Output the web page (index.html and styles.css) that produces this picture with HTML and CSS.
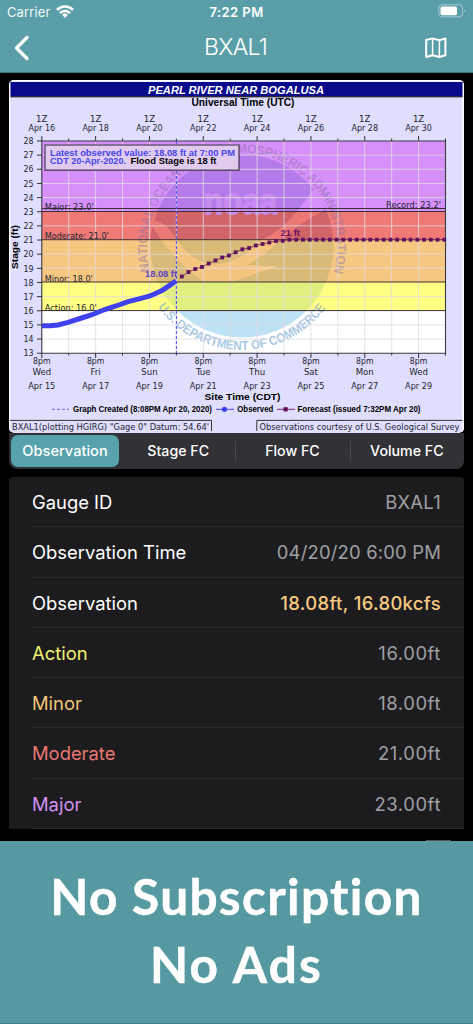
FILE: index.html
```html
<!DOCTYPE html>
<html lang="en">
<head>
<meta charset="utf-8">
<title>BXAL1</title>
<link rel="stylesheet" href="styles.css">
</head>
<body>
<div class="screen">
  <header class="header">
    <div class="status">
      <div class="carrier"><span>Carrier</span>
        <svg width="18" height="13" viewBox="0 0 18 13"><g fill="none" stroke="#fff" stroke-width="2.5"><path d="M1 4.9a11.3 11.3 0 0 1 16 0"/><path d="M4 8.1a7 7 0 0 1 10 0"/></g><path d="M6.2 9.9a4 4 0 0 1 5.6 0L9 12.8z" fill="#fff"/></svg>
      </div>
      <div class="time">7:22 PM</div>
      <svg class="battery" width="28" height="14" viewBox="0 0 28 14"><rect x=".8" y=".8" width="23.8" height="12" rx="3.4" fill="none" stroke="#a3cace"/><rect x="2.5" y="2.4" width="16.5" height="8.8" rx="1.8" fill="#fff"/><path d="M26 4.8q1.6 2 0 4z" fill="#a3cace"/></svg>
    </div>
    <nav class="nav">
      <svg width="16" height="26" viewBox="0 0 16 26"><path d="M13 2.5 2.5 13 13 23.5" fill="none" stroke="#fff" stroke-width="3.3" stroke-linecap="round" stroke-linejoin="round"/></svg>
      <h1>BXAL1</h1>
      <svg width="22" height="22" viewBox="0 0 22 22"><path d="M1.2 3 7.6 1.4 14.4 3.2 20.4 1.4V18.2L14.4 20 7.6 18.2 1.2 20Z" fill="none" stroke="#fff" stroke-width="2" stroke-linejoin="round"/><path d="M7.6 1.4V18.2M14.4 3.2V20" stroke="#fff" stroke-width="1.5"/></svg>
    </nav>
  </header>
  <main class="content">
    <svg class="chart" id="chart" width="455" height="353" viewBox="9 80 455 353">
      <defs>
        <clipPath id="disc"><circle cx="242" cy="246" r="91.5"/></clipPath>
        <path id="ringTop" d="M149.8 271A95 95 0 1 1 334.2 271"/>
        <path id="ringBottom" d="M157.9 307.1A104 104 0 0 0 326.1 307.1"/>
      </defs>
      <rect x="9" y="80" width="455" height="353" fill="#dfdefd"/>
      <path d="M9.5 80v353M463 80v353M9 80.8h455" stroke="#fff" stroke-width="1.6"/>
      <rect x="10.5" y="82" width="452" height="14.4" fill="#08088b"/>
      <path d="M10.5 96.8h452" stroke="#000"/>
      <text class="sans bold" x="148" y="93.6" font-size="11.6" font-style="italic" fill="#fff" textLength="176">PEARL RIVER NEAR BOGALUSA</text>
      <text class="sans bold" x="191.5" y="106.2" font-size="10" textLength="103">Universal Time (UTC)</text>
      <rect x="41.8" y="141" width="403.7" height="70.5" fill="#d690f9"/>
      <rect x="41.8" y="211.5" width="403.7" height="28.2" fill="#ee7975"/>
      <rect x="41.8" y="239.7" width="403.7" height="42.3" fill="#f6c780"/>
      <rect x="41.8" y="282" width="403.7" height="28.5" fill="#ffff83"/>
      <rect x="41.8" y="310.5" width="403.7" height="42.7" fill="#fff"/>
      <g clip-path="url(#disc)">
        <rect x="150" y="150" width="184" height="61.5" fill="#b57bea"/>
        <rect x="150" y="211.5" width="184" height="28.2" fill="#d06469"/>
        <rect x="150" y="239.7" width="184" height="42.3" fill="#d9ba77"/>
        <rect x="150" y="282" width="184" height="28.5" fill="#e0ef80"/>
        <rect x="150" y="310.5" width="184" height="30" fill="#bde2f4"/>
        <path d="M334 186 313 190 297 211.5H322L334 200Z" fill="#d690f9"/>
        <path d="M149 221C162 219 170 229 177 239.7H161Z" fill="#ec7974"/>
        <path d="M297 211.5H322Q301 222 281 239.7H262Q281 231 297 211.5Z" fill="#ec7974"/>
        <path d="M161 239.7H177C188 256 201 265 218 264Q241 262 262 239.7H281Q265 255 247 265L279 266 234 281H204C188 273 173 255 161 239.7Z" fill="#f5c580"/>
      </g>
      <text class="sans bold" x="204" y="214" font-size="36" fill="#c98cf3" stroke="#c98cf3" stroke-width="1.6" textLength="73">noaa</text>
      <g class="sans bold ring" font-size="13">
        <text fill="#8d6eae" fill-opacity=".48"><textPath href="#ringTop" textLength="346">NATIONAL OCEANIC AND ATMOSPHERIC ADMINISTRATION</textPath></text>
        <text fill="#6ca4cf" fill-opacity=".6"><textPath href="#ringBottom" textLength="195">U.S. DEPARTMENT OF COMMERCE</textPath></text>
      </g>
      <g id="grid"></g>
      <path d="M42 208.5H445.5M42 211.5H445.5M42 239.7H445.5M42 282H445.5M42 310.6H445.5" stroke="#3c3032"/>
      <path d="M41.8 353.2V141H445.5V353.2Z" fill="none" stroke="#3a3840" stroke-width="1.1"/>
      <path d="M176.4 141V353" stroke="#5656f5" stroke-width="1.1" stroke-dasharray="3 2"/>
      <g id="ticks"></g>
      <g class="deja" font-size="8.6">
        <text x="44.8" y="209.6" textLength="49">Major: 23.0'</text>
        <text x="44.8" y="239.2" textLength="64">Moderate: 21.0'</text>
        <text x="44.8" y="282" textLength="48">Minor: 18.0'</text>
        <text x="44.8" y="310.6" textLength="52">Action: 16.0'</text>
        <text x="386" y="208.4" textLength="55">Record: 23.2'</text>
      </g>
      <path d="M42 325.7H50L58 325 68 322.3 80 318.5 92 314.7 104 309.8 116 306 128 301.7 140 298.6 150 296 162 290.5 170 285.2 176 280.8" fill="none" stroke="#4040ed" stroke-width="5"/>
      <text class="sans bold" x="145" y="277" font-size="8.5" fill="#5a42c5" textLength="32">18.08 ft</text>
      <g id="forecast"></g>
      <text class="sans bold" x="280.5" y="235.5" font-size="8.5" fill="#6b1262" textLength="19.5">21 ft</text>
      <rect x="45" y="145" width="194" height="25.2" fill="#e0cbee" stroke="#4b3b55" stroke-width="1.3"/>
      <path d="M45 170V145H239" fill="none" stroke="#8c729e" stroke-width="1.3"/>
      <g class="sans bold" font-size="8.2">
        <text x="50" y="155.6" fill="#4646ea" textLength="185">Latest observed value: 18.08 ft at 7:00 PM</text>
        <text x="50" y="164.2" fill="#4646ea" textLength="76">CDT 20-Apr-2020.</text>
        <text x="130.5" y="164.2" textLength="86">Flood Stage is 18 ft</text>
      </g>
      <text class="sans bold" transform="translate(18.3 269) rotate(-90)" font-size="9.6" textLength="44">Stage (ft)</text>
      <text class="sans bold" x="204.5" y="400.4" font-size="9.6" textLength="76">Site Time (CDT)</text>
      <path d="M52 409.3H69" stroke="#6262ef" stroke-dasharray="3 2"/>
      <path d="M216 409.3H234" stroke="#4646ee"/><circle cx="224.5" cy="409.3" r="2.6" fill="#4040ed"/>
      <path d="M277 409.3H295" stroke="#78246f"/><rect x="283.5" y="407.2" width="4.2" height="4.2" fill="#650c5b"/>
      <g class="sans bold" font-size="8.2">
        <text x="73" y="412.2" textLength="139">Graph Created (8:08PM Apr 20, 2020)</text>
        <text x="237.3" y="412.2" textLength="36">Observed</text>
        <text x="297.5" y="412.2" textLength="123">Forecast (issued 7:32PM Apr 20)</text>
      </g>
      <path d="M10 420.4H211.5V431M462.5 420.4H256.8V431" fill="none" stroke="#333"/>
      <g class="deja" font-size="8.6">
        <text x="12" y="430.2" textLength="197">BXAL1(plotting HGIRG) "Gage 0" Datum: 54.64'</text>
        <text x="259.5" y="430.2" textLength="200">Observations courtesy of U.S. Geological Survey</text>
      </g>
    </svg>
    <div class="segments">
      <div class="segment active"><span>Observation</span></div>
      <div class="segment"><span>Stage FC</span></div>
      <div class="segment split"><span>Flow FC</span></div>
      <div class="segment split"><span>Volume FC</span></div>
    </div>
    <section class="list">
      <div class="row"><span>Gauge ID</span><span class="value name">BXAL1</span></div>
      <div class="row"><span>Observation Time</span><span class="value">04/20/20 6:00 PM</span></div>
      <div class="row"><span>Observation</span><span class="value current">18.08ft, 16.80kcfs</span></div>
      <div class="row"><span class="action">Action</span><span class="value level">16.00ft</span></div>
      <div class="row"><span class="minor">Minor</span><span class="value level">18.00ft</span></div>
      <div class="row"><span class="moderate">Moderate</span><span class="value level">21.00ft</span></div>
      <div class="row"><span class="major">Major</span><span class="value level">23.00ft</span></div>
    </section>
    <div class="handle"></div>
  </main>
  <footer class="promo"><p>No Subscription</p><p class="ads">No Ads</p></footer>
</div>
<script src="chart.js"></script>
</body>
</html>
```
FILE: styles.css
```css
* { box-sizing: border-box; }
body { margin: 0; background: #000; font-family: Inter, sans-serif; color: #fff; }
.screen { width: 473px; height: 1024px; display: flex; flex-direction: column; overflow: hidden; }
.header { height: 73px; flex: none; background: #5a9fa8; border-bottom: 1px solid #407b82; }
.status { height: 24px; display: grid; grid-template-columns: 1fr auto 1fr; align-items: center; padding: 0 7px 0 7px; font-size: 13px; }
.carrier { display: flex; align-items: center; gap: 6px; letter-spacing: .12px; color: #eef8f9; }
.carrier svg { margin-top: -2px; }
.time { font-weight: 600; letter-spacing: .45px; }
.battery { justify-self: end; margin-top: -2px; }
.nav { height: 48px; display: grid; grid-template-columns: 1fr auto 1fr; align-items: center; padding: 0 26px 0 14px; }
.nav h1 { margin: 0 0 3px 10px; font-size: 23px; font-weight: 300; letter-spacing: -.7px; }
.nav svg:last-child { justify-self: end; }
.content { height: 768px; flex: none; padding: 7px 9px 0; display: flex; flex-direction: column; }
.chart { display: block; flex: none; border-radius: 5px; }
.sans { font-family: "Liberation Sans", Arial, sans-serif; }
.bold { font-weight: 700; }
.deja { font-family: "DejaVu Sans", sans-serif; fill: #252532; }
.segments { height: 36px; flex: none; display: grid; grid-template-columns: 110px 1fr 1fr 1fr; background: #313136; border-radius: 0 0 8px 8px; padding: 2px 0 2px 2px; font-size: 14.2px; font-weight: 500; }
.segment { display: flex; align-items: center; justify-content: center; padding-bottom: 1px; }
.segment.active { background: #57a3ad; border-radius: 7px; margin-right: 2px; font-size: 14.6px; padding-bottom: 0; }
.segment.split { background: linear-gradient(#48484d, #48484d) left center / 1px 20px no-repeat; }
.list { margin-top: 8px; flex: none; background: #1c1c1e; border-radius: 4px 4px 0 0; padding-left: 23px; }
.row { height: 50.28px; display: flex; align-items: center; justify-content: space-between; border-bottom: 1px solid #2b2b2d; padding: 1px 23px 0 0; font-size: 18.4px; }
.value { color: #a0a0a4; letter-spacing: .2px; }
.value.name { letter-spacing: .3px; }
.value.level { letter-spacing: .6px; }
.value.current { color: #f7c981; font-weight: 500; letter-spacing: .35px; }
.action { color: #f2f171; }
.minor { color: #f4c577; }
.moderate { color: #eb7773; }
.major { color: #d391f4; }
.handle { width: 25px; height: 1px; margin-top: auto; margin-left: 417px; background: #555; }
.promo { flex: 1; background: #5799a1; border-bottom: 1px solid #438088; text-align: center; font-family: Lato, sans-serif; font-weight: 700; font-size: 49.5px; line-height: 68px; padding-top: 21px; -webkit-text-stroke: .5px #fff; }
.promo p { margin: 0; letter-spacing: 1.35px; }
.promo .ads { letter-spacing: 2.2px; }
```
FILE: chart.js
```js
const x0 = 41.8, x1 = 445.5, top28 = 141, foot = 14.147, half = (x1 - x0) / 15;
let grid = "", ticks = "", marks = "";
for (let i = 1; i < 15; i++) grid += `<path d="M${x0 + i * half} 141V353"/>`;
for (let ft = 14; ft < 28; ft++) {
  if (![16, 18, 21, 23].includes(ft)) grid += `<path d="M42 ${top28 + (28 - ft) * foot}H445.5"/>`;
}
document.getElementById("grid").innerHTML = `<g stroke="#e2dce2" stroke-opacity=".8">${grid}</g>`;

for (let ft = 13; ft <= 28; ft++) {
  const y = top28 + (28 - ft) * foot;
  ticks += `<path d="M37 ${y}H42" stroke="#333"/><text x="23.5" y="${y + 3.2}" textLength="10">${ft}</text>`;
}
const days = ["Wed", "Fri", "Sun", "Tue", "Thu", "Sat", "Mon", "Wed"];
for (let i = 0; i < 16; i++) {
  const x = x0 + i * half, len = i % 2 ? 2.5 : 5;
  ticks += `<path d="M${x} ${141 - len}V141M${x} 353V${353 + len}" stroke="#333"/>`;
}
days.forEach((day, n) => {
  const x = x0 + n * 2 * half;
  ticks += `<g text-anchor="middle"><text x="${x}" y="121.8">1Z</text><text x="${x}" y="131" textLength="26.5">Apr ${16 + n * 2}</text>
    <text x="${x}" y="364.4" textLength="17.5">8pm</text><text x="${x}" y="375">${day}</text><text x="${x}" y="388.6" textLength="27">Apr ${15 + n * 2}</text></g>`;
});
document.getElementById("ticks").innerHTML = `<g class="deja" font-size="8.6">${ticks}</g>`;

const rise = [276.5, 272, 269, 267, 263.5, 260.5, 257.5, 255.5, 252.3, 249.3, 248, 245.5, 244, 242.5, 241, 240.8];
const points = Array.from({ length: 40 }, (_, i) => [181.8 + i * 6.73, rise[i] || 239.7]);
marks = `<polyline fill="none" stroke="#8e405f" points="${points.join(" ")}"/>`;
points.forEach(([x, y]) => {
  marks += `<rect x="${x - 1.9}" y="${y - 1.9}" width="3.8" height="3.8" fill="#5f1060"/>`;
});
document.getElementById("forecast").innerHTML = marks;

document.querySelectorAll("#chart [textLength]").forEach((label) => {
  label.setAttribute("lengthAdjust", "spacingAndGlyphs");
});
```
